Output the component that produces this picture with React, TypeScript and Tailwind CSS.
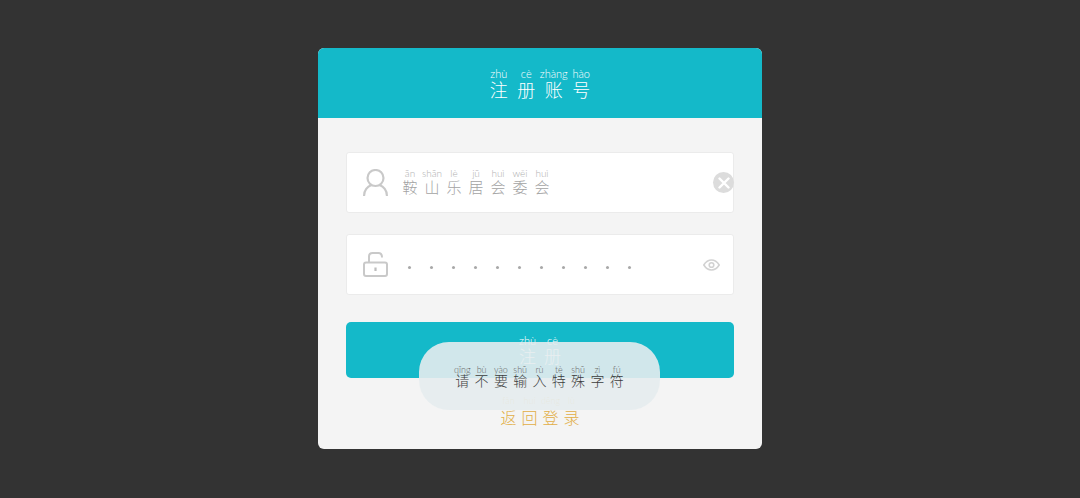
const cjk = { fontFamily: '"Noto Sans CJK SC", sans-serif' };
const latin = { fontFamily: 'Lato, "Noto Sans", sans-serif' };

function Ruby({ items, cell, charClass, pyClass }: { items: [string, string][]; cell: string; charClass: string; pyClass: string }) {
  return (
    <div className="flex">
      {items.map(([py, ch], i) => (
        <div key={i} className={`flex flex-col items-center ${cell}`}>
          <span className={`whitespace-nowrap font-light ${pyClass}`} style={latin}>{py}</span>
          <span className={`whitespace-nowrap font-light ${charClass}`} style={cjk}>{ch}</span>
        </div>
      ))}
    </div>
  );
}

function UserIcon() {
  return (
    <svg width="25" height="27" viewBox="0 0 25 27" fill="none" stroke="#c9c9c9" strokeWidth="2.2" className="shrink-0">
      <circle cx="12.5" cy="9" r="8" />
      <path d="M1.1 26.5c0-5 3.4-9 7-10.2M23.9 26.5c0-5-3.4-9-7-10.2" strokeLinecap="round" />
    </svg>
  );
}

function LockIcon() {
  return (
    <svg width="25" height="25" viewBox="0 0 25 25" fill="none" stroke="#c9c9c9" strokeWidth="2" className="shrink-0">
      <rect x="1" y="10.5" width="23" height="13.5" rx="2" />
      <path d="M6 10.5V4.5C6 2.5 7.2 1 9.5 1h6C17.8 1 19 2.5 19 5.5" />
      <path d="M12.5 15.5v3.5" strokeWidth="2.2" stroke="#bdbdbd" />
    </svg>
  );
}

const dots = Array.from({ length: 11 });

export default function App() {
  return (
    <div className="flex h-[498px] w-[1080px] justify-center overflow-hidden bg-[#333333] pt-[48px]">
      <div className="relative h-[401px] w-[444px] overflow-hidden rounded-[6px] bg-[#f4f4f4]">
        <div className="flex h-[70px] items-center justify-center bg-[#14b9c9]">
          <Ruby
            items={[["zhù", "注"], ["cè", "册"], ["zhàng", "账"], ["hào", "号"]]}
            cell="w-[27.5px]"
            pyClass="text-[11px] leading-[12px] text-white"
            charClass="text-[18px] leading-[18px] text-white"
          />
        </div>

        <div className="mx-[28px] mt-[34px] flex h-[61px] items-center rounded-[3px] border border-[#ebebeb] bg-white pl-[16px]">
          <UserIcon />
          <div className="ml-[11px] mb-[3px]">
            <Ruby
              items={[["ān", "鞍"], ["shān", "山"], ["lè", "乐"], ["jū", "居"], ["huì", "会"], ["wěi", "委"], ["huì", "会"]]}
              cell="w-[22px]"
              pyClass="text-[10px] leading-[12px] text-[#b0b0b0]"
              charClass="text-[15px] leading-[16px] text-[#a3a3a3]"
            />
          </div>
          <div className="ml-auto mr-[-1px] flex h-[21px] w-[21px] items-center justify-center rounded-full bg-[#dcdcdc]">
            <svg width="12" height="12" viewBox="0 0 12 12" stroke="#ffffff" strokeWidth="2.4" strokeLinecap="round">
              <path d="M1.5 1.5l9 9M10.5 1.5l-9 9" />
            </svg>
          </div>
        </div>

        <div className="mx-[28px] mt-[21px] flex h-[61px] items-center rounded-[3px] border border-[#ebebeb] bg-white pl-[16px] pr-[13px]">
          <LockIcon />
          <div className="ml-[20px] mt-[6px] flex gap-[19px]">
            {dots.map((_, i) => (
              <span key={i} className="h-[3px] w-[3px] rounded-full bg-[#a8a8a8]" />
            ))}
          </div>
          <svg width="17" height="12" viewBox="0 0 17 12" fill="none" stroke="#d2d2d2" strokeWidth="1.6" className="ml-auto">
            <path d="M0.8 6c2-3.2 4.8-5 7.7-5s5.7 1.8 7.7 5c-2 3.2-4.8 5-7.7 5s-5.7-1.8-7.7-5z" />
            <circle cx="8.5" cy="6" r="2.3" />
          </svg>
        </div>

        <div className="mx-[28px] mt-[27px] flex h-[56px] justify-center rounded-[5px] bg-[#14b9c9] pt-[13px]">
          <Ruby
            items={[["zhù", "注"], ["cè", "册"]]}
            cell="w-[25px]"
            pyClass="text-[11px] leading-[12px] text-white"
            charClass="text-[17px] leading-[18px] text-white"
          />
        </div>

        <div className="mt-[17px] flex justify-center">
          <Ruby
            items={[["fǎn", "返"], ["huí", "回"], ["dēng", "登"], ["lù", "录"]]}
            cell="w-[21px]"
            pyClass="text-[9px] leading-[12px] text-[#e5b64f]"
            charClass="text-[16px] leading-[20px] text-[#e2ae45]"
          />
        </div>

        <div className="absolute left-[101px] top-[294px] flex h-[68px] w-[241px] items-start justify-center rounded-[30px] bg-[#e6ecee]/90 pt-[23px]">
          <Ruby
            items={[["qǐng", "请"], ["bù", "不"], ["yào", "要"], ["shū", "输"], ["rù", "入"], ["tè", "特"], ["shū", "殊"], ["zì", "字"], ["fú", "符"]]}
            cell="w-[19.3px]"
            pyClass="text-[9px] leading-[10px] text-[#666666]"
            charClass="text-[14px] leading-[11px] text-[#3d3d3d]"
          />
        </div>
      </div>
    </div>
  );
}
